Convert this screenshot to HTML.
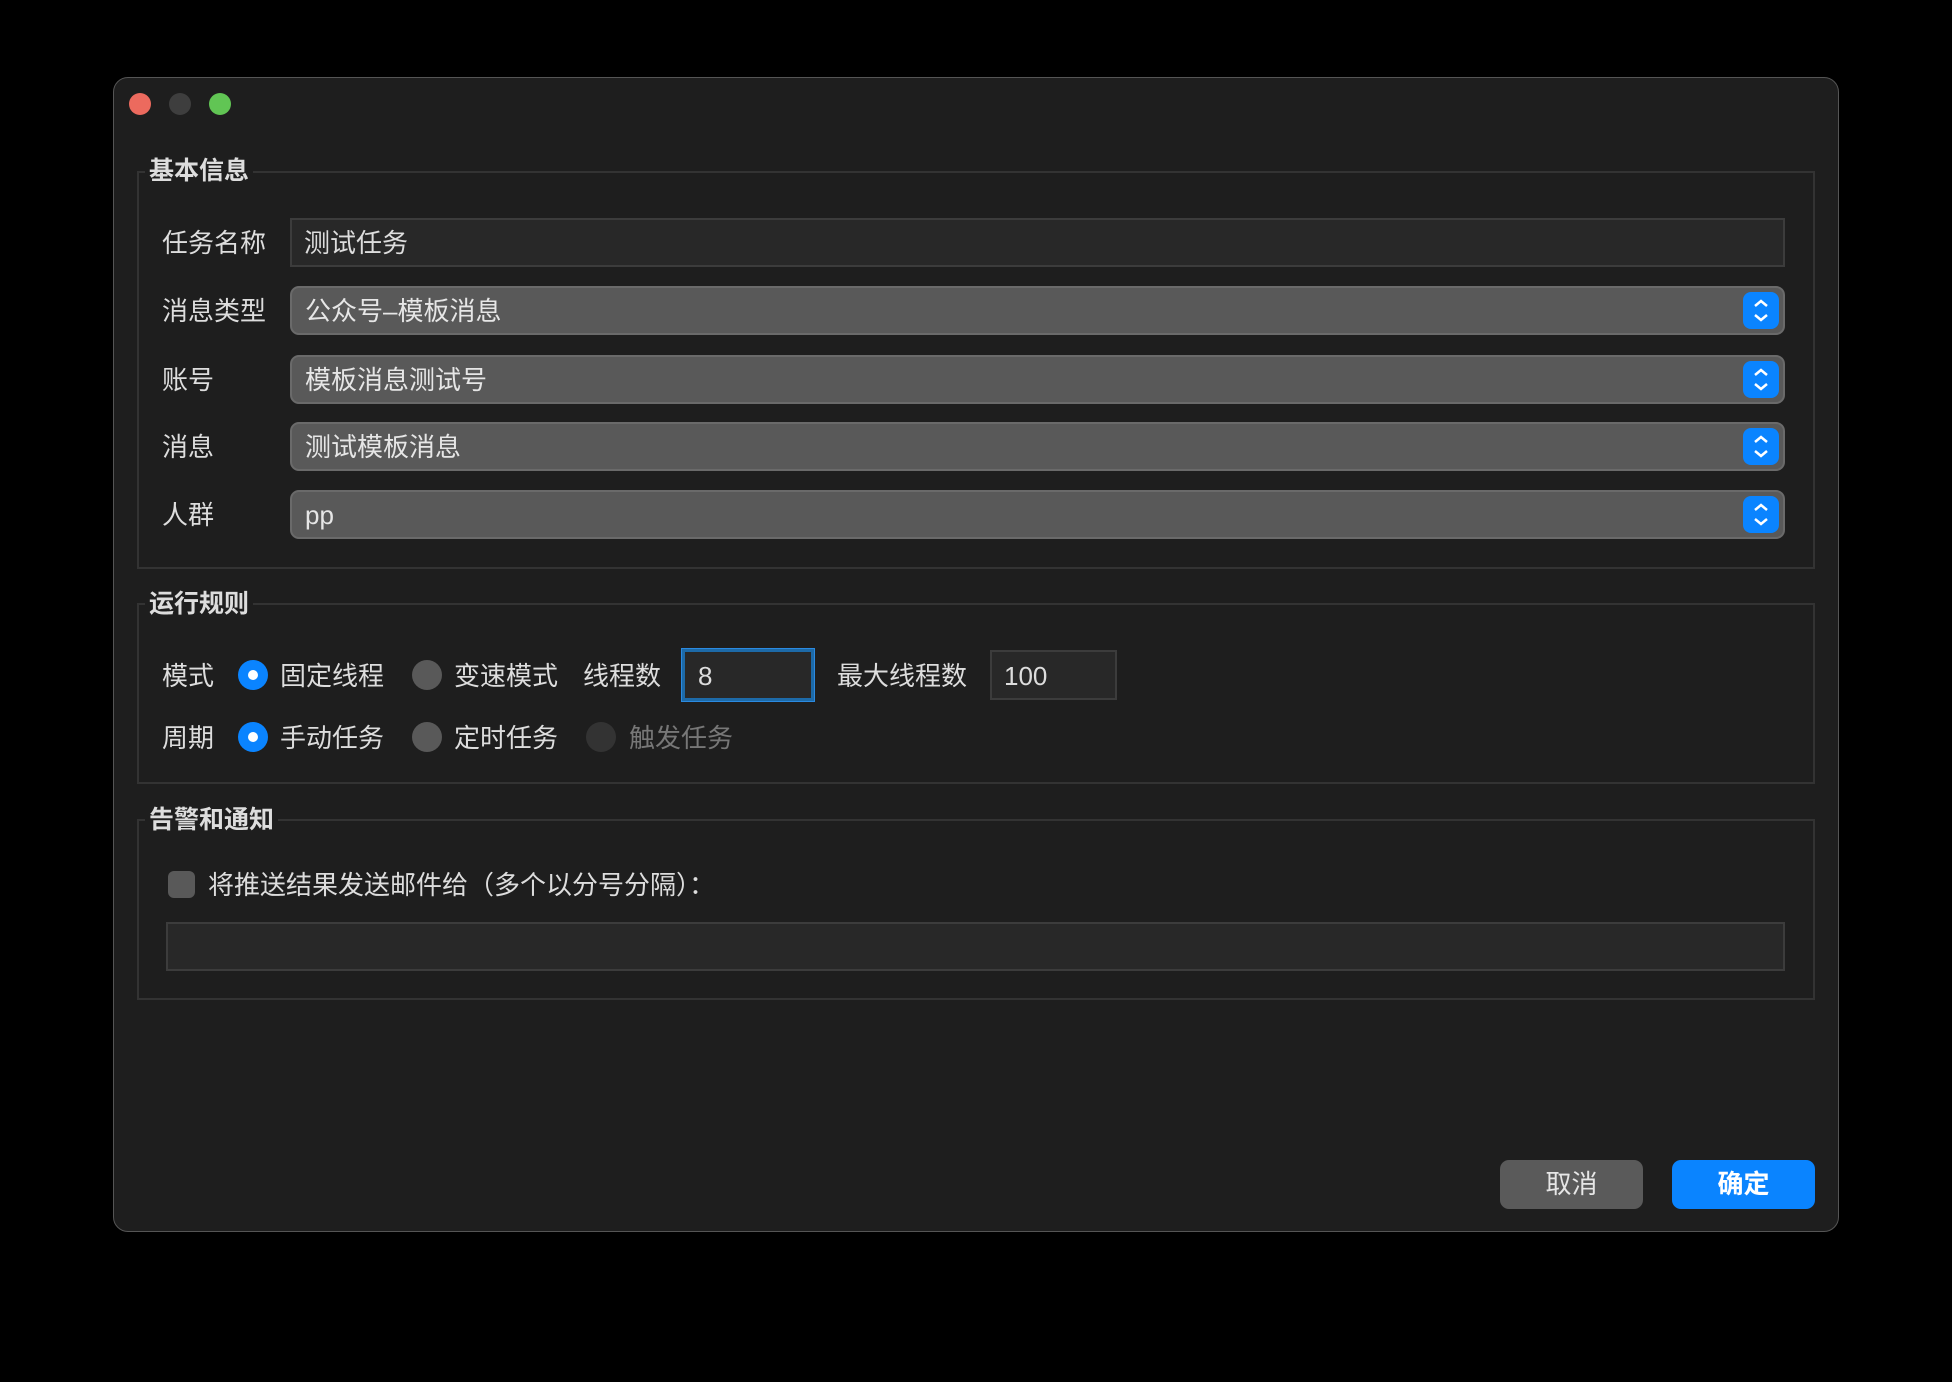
<!DOCTYPE html>
<html><head><meta charset="utf-8"><style>
*{box-sizing:border-box;margin:0;padding:0}
body{width:1952px;height:1382px;background:#000;position:relative;overflow:hidden;font-family:"Liberation Sans","Noto Sans CJK SC",sans-serif;color:#e0e0e0}
.win{position:absolute;left:113px;top:77px;width:1726px;height:1155px;background:#1e1e1e;border:1px solid #555;border-radius:15px}
.a{position:absolute}
.dot{position:absolute;width:22px;height:22px;border-radius:50%;top:93px}
.grp{position:absolute;left:137px;width:1678px;border:2px solid #333}
.gt{position:absolute;left:145px;font-weight:bold;font-size:25px;background:#1e1e1e;padding:0 4px;line-height:30px;color:#ddd}
.lb{position:absolute;font-size:26px;line-height:30px;color:#ddd}
.inp{position:absolute;background:#282828;border:2px solid #3c3c3c}
.sel{position:absolute;left:290px;width:1495px;height:49px;background:#595959;border:2px solid #6a6a6a;border-radius:9px;font-size:26px;line-height:47px;padding-left:13px;color:#e6e6e6}
.st{position:absolute;right:4px;top:4px;width:36px;height:37px;background:#0a84ff;border-radius:8px}
.rd{position:absolute;width:30px;height:30px;border-radius:50%;background:#595959}
.rd.on{background:#0a84ff}
.rd.on::after{content:"";position:absolute;left:10px;top:10px;width:10px;height:10px;border-radius:50%;background:#fff}
.btn{position:absolute;top:1160px;width:143px;height:49px;border-radius:9px;font-size:26px;text-align:center;line-height:49px}
</style></head><body>
<div class="win"></div>
<div class="dot" style="left:129px;background:#ec6a5e"></div>
<div class="dot" style="left:169px;background:#3e3e3e"></div>
<div class="dot" style="left:209px;background:#61c554"></div>

<div class="grp" style="top:171px;height:398px"></div>
<div class="gt" style="top:156px">基本信息</div>
<div class="lb" style="left:162px;top:228px">任务名称</div>
<div class="inp" style="left:290px;top:218px;width:1495px;height:49px"></div>
<div class="lb" style="left:304px;top:228px">测试任务</div>

<div class="lb" style="left:162px;top:296px">消息类型</div>
<div class="sel" style="top:286px">公众号–模板消息<div class="st"><svg width="36" height="37"><path d="M12 14l6-5 6 5M12 23l6 5 6-5" stroke="#fff" stroke-width="2.5" fill="none"/></svg></div></div>
<div class="lb" style="left:162px;top:365px">账号</div>
<div class="sel" style="top:355px">模板消息测试号<div class="st"><svg width="36" height="37"><path d="M12 14l6-5 6 5M12 23l6 5 6-5" stroke="#fff" stroke-width="2.5" fill="none"/></svg></div></div>
<div class="lb" style="left:162px;top:432px">消息</div>
<div class="sel" style="top:422px">测试模板消息<div class="st"><svg width="36" height="37"><path d="M12 14l6-5 6 5M12 23l6 5 6-5" stroke="#fff" stroke-width="2.5" fill="none"/></svg></div></div>
<div class="lb" style="left:162px;top:500px">人群</div>
<div class="sel" style="top:490px">pp<div class="st"><svg width="36" height="37"><path d="M12 14l6-5 6 5M12 23l6 5 6-5" stroke="#fff" stroke-width="2.5" fill="none"/></svg></div></div>

<div class="grp" style="top:603px;height:181px"></div>
<div class="gt" style="top:589px">运行规则</div>
<div class="lb" style="left:162px;top:661px">模式</div>
<div class="rd on" style="left:238px;top:660px"></div>
<div class="lb" style="left:280px;top:661px">固定线程</div>
<div class="rd" style="left:412px;top:660px"></div>
<div class="lb" style="left:454px;top:661px">变速模式</div>
<div class="lb" style="left:583px;top:661px">线程数</div>
<div class="inp" style="left:682px;top:649px;width:132px;height:52px;border:3px solid #1d6aa8;outline:1px solid #2b8ae0"></div>
<div class="lb" style="left:698px;top:661px">8</div>
<div class="lb" style="left:837px;top:661px">最大线程数</div>
<div class="inp" style="left:990px;top:650px;width:127px;height:50px"></div>
<div class="lb" style="left:1004px;top:661px">100</div>

<div class="lb" style="left:162px;top:723px">周期</div>
<div class="rd on" style="left:238px;top:722px"></div>
<div class="lb" style="left:280px;top:723px">手动任务</div>
<div class="rd" style="left:412px;top:722px"></div>
<div class="lb" style="left:454px;top:723px">定时任务</div>
<div class="rd" style="left:586px;top:722px;background:#333"></div>
<div class="lb" style="left:629px;top:723px;color:#777">触发任务</div>

<div class="grp" style="top:819px;height:181px"></div>
<div class="gt" style="top:805px">告警和通知</div>
<div class="a" style="left:168px;top:871px;width:27px;height:27px;border-radius:6px;background:#595959"></div>
<div class="lb" style="left:208px;top:870px">将推送结果发送邮件给（多个以分号分隔）：</div>
<div class="inp" style="left:166px;top:922px;width:1619px;height:49px"></div>

<div class="btn" style="left:1500px;background:#5a5a5a;color:#e6e6e6">取消</div>
<div class="btn" style="left:1672px;background:#0a84ff;color:#fff;font-weight:bold">确定</div>
</body></html>
